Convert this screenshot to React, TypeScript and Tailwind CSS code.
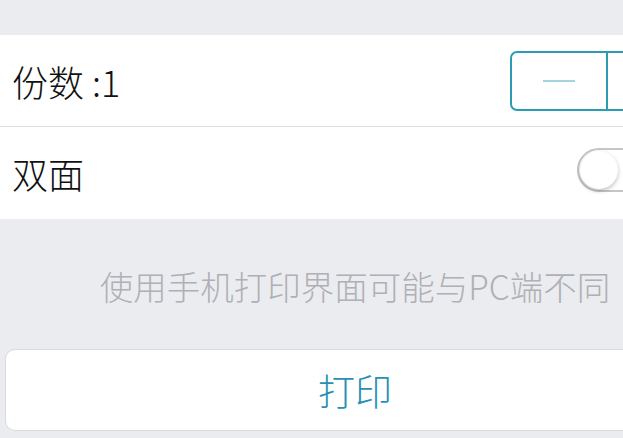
import React from "react";

export default function App() {
  const font = { fontFamily: '"Noto Sans CJK SC", "Noto Sans", sans-serif' };
  return (
    <div className="w-[623px] h-[438px] overflow-hidden bg-[#ebecf0]" style={font}>
      <div className="w-[710px] flex flex-col">
        <div className="h-[35px]" />
        <div className="h-[92px] bg-white flex items-center justify-between pl-[12px] pr-[4px] border-b border-[#dcdcdf]">
          <span className="text-[36px] leading-none font-light text-[#111111]">份数 :1</span>
          <div className="flex h-[60px] border-2 border-[#2b9cb1] rounded-[7px] overflow-hidden">
            <div className="w-[96px] flex items-center justify-center border-r-2 border-[#2b9cb1]">
              <div className="w-[32px] h-[2px] bg-[#a3d5de]" />
            </div>
            <div className="w-[96px] flex items-center justify-center">
              <div className="w-[32px] h-[2px] bg-[#2b9cb1]" />
            </div>
          </div>
        </div>
        <div className="h-[92px] bg-white flex items-center justify-between pl-[12px] pr-[57px]">
          <span className="text-[36px] leading-none font-light text-[#111111]">双面</span>
          <div className="w-[76px] h-[44px] rounded-full border-[2px] border-[#c6c6c6] bg-white flex items-center p-[1px] mt-[-6px]">
            <div className="w-[38px] h-[38px] rounded-full bg-white shadow-[0_2px_4px_rgba(0,0,0,0.25)]" />
          </div>
        </div>
        <div className="h-[130px] flex items-center justify-center">
          <span className="text-[33.5px] leading-none font-light text-[#b0b0b4] mt-[4px]">使用手机打印界面可能与PC端不同</span>
        </div>
        <div className="mx-[5px] h-[82px] bg-white rounded-[10px] border border-[#d9d9de] flex items-center justify-center">
          <span className="text-[37px] leading-none font-light text-[#2790b3]">打印</span>
        </div>
      </div>
    </div>
  );
}
